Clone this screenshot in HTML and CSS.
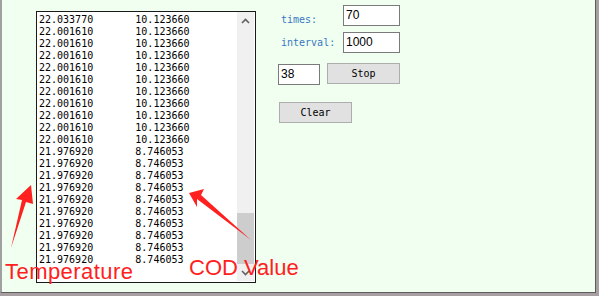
FILE: index.html
```html
<!DOCTYPE html>
<html lang="en">

<head>
    <meta charset="UTF-8">
    <meta name="viewport" content="width=device-width, initial-scale=1.0">
    <title>Serial Monitor</title>
    <link rel="stylesheet" href="styles.css">
</head>

<body>
    <div class="window">
        <div class="listbox">
            <pre id="output" class="output"></pre>
            <div class="scrollbar">
                <div class="sb-btn">
                    <svg width="9" height="6" viewBox="0 0 9 6"><polyline points="1,5 4.5,1.5 8,5" fill="none" stroke="#606060" stroke-width="1.6"/></svg>
                </div>
                <div class="sb-track">
                    <div class="sb-thumb"></div>
                </div>
                <div class="sb-btn">
                    <svg width="9" height="6" viewBox="0 0 9 6"><polyline points="1,1 4.5,4.5 8,1" fill="none" stroke="#606060" stroke-width="1.6"/></svg>
                </div>
            </div>
        </div>

        <div class="controls">
            <div class="row">
                <label class="lbl lbl-low">times:</label>
                <input class="field" type="text" value="70">
            </div>
            <div class="row row-mid">
                <label class="lbl">interval:</label>
                <input class="field" type="text" value="1000">
            </div>
            <div class="row row-run">
                <input class="field count" type="text" value="38">
                <button class="btn">Stop</button>
            </div>
            <div class="row row-clear">
                <button class="btn" onclick="clearOutput()">Clear</button>
            </div>
        </div>

        <!-- annotations drawn over the screenshot -->
        <svg class="arrows" width="596" height="293">
            <polygon points="31,185 16,199 22,200 11,248 26,202 33,204" fill="#ff2020"/>
            <polygon points="189,193 204,189 201,195 251,240 197,199 197,207" fill="#ff2020"/>
        </svg>
        <div class="note note-temp">Temperature</div>
        <div class="note note-cod">COD Value</div>
    </div>

    <script>
        const rows = [['22.033770', '10.123660']];
        for (let i = 0; i < 10; i++) rows.push(['22.001610', '10.123660']);
        for (let i = 0; i < 10; i++) rows.push(['21.976920', '8.746053']);

        function renderOutput() {
            document.getElementById('output').textContent =
                rows.map(r => r[0].padEnd(16, ' ') + r[1]).join('\n');
        }

        function clearOutput() {
            rows.length = 0;
            renderOutput();
        }

        renderOutput();
    </script>
</body>

</html>
```

FILE: styles.css
```css
body {
    margin: 0;
    padding: 0;
    background-color: #a89fa2;
    font-family: 'DejaVu Sans Mono', monospace;
}

.window {
    position: relative;
    display: flex;
    align-items: flex-start;
    width: 593px;
    height: 292px;
    background-color: #f0fff0;
    border-left: 2px solid #a0a0a0;
    border-right: 1px solid #5c5c5c;
    border-bottom: 1px solid #5c5c5c;
}

.listbox {
    display: flex;
    width: 218px;
    height: 270px;
    margin: 11px 0 0 34px;
    background-color: #fff;
    border: 1px solid #1a1a1a;
}

.output {
    flex: 1;
    margin: 0;
    padding: 2px 0 0 2px;
    font-family: 'DejaVu Sans Mono', monospace;
    font-size: 10px;
    line-height: 12px;
    color: #000;
    overflow: hidden;
}

.scrollbar {
    display: flex;
    flex-direction: column;
    width: 17px;
    margin: 0 1px 1px 0;
    background-color: #f0f0f0;
}

.sb-btn {
    height: 17px;
    display: flex;
    align-items: center;
    justify-content: center;
}

.sb-track {
    flex: 1;
    display: flex;
    flex-direction: column;
}

.sb-thumb {
    margin-top: auto;
    height: 51px;
    background-color: #cdcdcd;
}

.controls {
    display: flex;
    flex-direction: column;
    margin-left: 22px;
    padding-top: 5px;
}

.row {
    display: flex;
    align-items: center;
    height: 21px;
}

.row-mid {
    margin-top: 6px;
}

.row-run {
    margin-top: 10px;
    gap: 7px;
}

.row-clear {
    margin-top: 18px;
    padding-left: 1px;
}

.lbl {
    width: 62px;
    padding-left: 3px;
    font-size: 10px;
    line-height: 12px;
    color: #3a78c2;
}

.lbl-low {
    align-self: flex-end;
}

.field {
    box-sizing: border-box;
    width: 57px;
    height: 21px;
    margin: 0;
    padding: 0 2px 2px;
    border: 1px solid #7a7a7a;
    background-color: #fff;
    font-family: 'Liberation Sans', Arial, sans-serif;
    font-size: 12px;
    color: #000;
    outline: none;
}

.count {
    width: 42px;
    margin-top: 2px;
}

.btn {
    box-sizing: border-box;
    width: 73px;
    height: 21px;
    margin: 0;
    padding: 0;
    background-color: #e1e1e1;
    border: 1px solid #adadad;
    font-family: 'DejaVu Sans Mono', monospace;
    font-size: 10px;
    color: #000;
    cursor: pointer;
}

.arrows {
    position: absolute;
    left: -2px;
    top: 0;
    pointer-events: none;
}

.note {
    position: absolute;
    font-family: 'Liberation Sans', Arial, sans-serif;
    font-size: 22px;
    line-height: 22px;
    color: #ff2020;
    white-space: nowrap;
}

.note-temp {
    left: 3px;
    top: 261px;
    letter-spacing: 0.45px;
}

.note-cod {
    left: 187px;
    top: 257px;
}
```
